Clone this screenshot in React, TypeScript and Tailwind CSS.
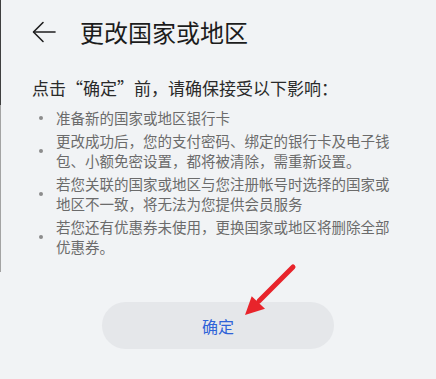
import React from 'react';

const items = [
  '准备新的国家或地区银行卡',
  '更改成功后，您的支付密码、绑定的银行卡及电子钱包、小额免密设置，都将被清除，需重新设置。',
  '若您关联的国家或地区与您注册帐号时选择的国家或地区不一致，将无法为您提供会员服务',
  '若您还有优惠券未使用，更换国家或地区将删除全部优惠券。',
];

const font = { fontFamily: '"Noto Sans CJK SC", "Noto Sans", sans-serif' };

export default function App() {
  return (
    <div className="relative flex w-[436px] h-[379px] bg-[#f1f3f5] overflow-hidden" style={font}>
      {/* left edge strip */}
      <div className="w-px flex flex-col shrink-0">
        <div className="h-[105px] bg-[#3f3f3f]" />
        <div className="h-[167px] bg-[#a3a3a3]" />
      </div>

      <div className="flex-1 flex flex-col pl-[31px]">
        <div className="h-[64px] flex items-center">
          <svg width="24" height="24" viewBox="0 0 24 24" fill="none" stroke="#1f1f1f" strokeWidth="1.6" strokeLinecap="round" strokeLinejoin="round">
            <path d="M23 12H2" />
            <path d="M11 2.5L1.5 12l9.5 9.5" />
          </svg>
          <h1 className="ml-[24px] text-[24px] leading-[32px] text-[#1c1c1c]">更改国家或地区</h1>
        </div>

        <p className="mt-[12px] text-[17px] leading-[24px] text-[#2a2a2a]">
          点击“确定”前，请确保接受以下影响：
        </p>

        <ul className="mt-[8px] flex flex-col gap-[3px]">
          {items.map((t) => (
            <li key={t} className="flex items-center">
              <span className="ml-[7px] w-[4px] h-[4px] rounded-full bg-[#8c8c8c] shrink-0" />
              <span className="ml-[13px] w-[340px] text-[14.5px] leading-[20px] text-[#6b6b6b]">{t}</span>
            </li>
          ))}
        </ul>

        <button className="mt-[45px] ml-[70px] w-[232px] h-[47px] rounded-full bg-[#e5e7ea] text-[16px] text-[#2f63d8]">
          确定
        </button>
      </div>

      {/* red annotation arrow */}
      <svg className="absolute left-[240px] top-[260px]" width="60" height="60" viewBox="0 0 60 60">
        <path d="M53 7L19 41" stroke="#e8242b" strokeWidth="5" strokeLinecap="round" />
        <path d="M5 55L11.7 36.2L25 48.8Z" fill="#e8242b" />
      </svg>
    </div>
  );
}
